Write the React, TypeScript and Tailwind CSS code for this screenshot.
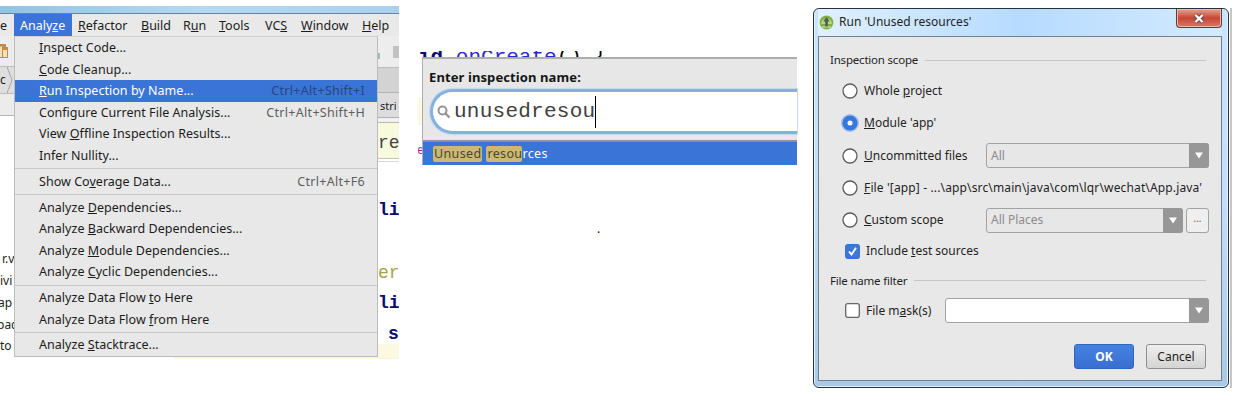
import React from "react";
import clsx from "clsx";

/** Renders a label, underlining the character that follows "&". */
function Label({ text }: { text: string }) {
  const i = text.indexOf("&");
  if (i < 0) return <>{text}</>;
  return (
    <>
      {text.slice(0, i)}
      <span className="underline decoration-1 underline-offset-1">{text[i + 1]}</span>
      {text.slice(i + 2)}
    </>
  );
}

type Item = { text: string; keys?: string; active?: boolean };

const groups: Item[][] = [
  [
    { text: "&Inspect Code..." },
    { text: "&Code Cleanup..." },
    { text: "&Run Inspection by Name...", keys: "Ctrl+Alt+Shift+I", active: true },
    { text: "Configure Current File Analysis...", keys: "Ctrl+Alt+Shift+H" },
    { text: "View &Offline Inspection Results..." },
    { text: "Infer Nullity..." },
  ],
  [{ text: "Show Co&verage Data...", keys: "Ctrl+Alt+F6" }],
  [
    { text: "Analyze &Dependencies..." },
    { text: "Analyze &Backward Dependencies..." },
    { text: "Analyze &Module Dependencies..." },
    { text: "Analyze &Cyclic Dependencies..." },
  ],
  [{ text: "Analyze Data Flow &to Here" }, { text: "Analyze Data Flow &from Here" }],
  [{ text: "Analyze &Stacktrace..." }],
];

const menus = [
  { text: "&Refactor", width: "w-[63px]" },
  { text: "&Build", width: "w-[42px]" },
  { text: "R&un", width: "w-[36px]" },
  { text: "&Tools", width: "w-[46px]" },
  { text: "VC&S", width: "w-[36px]" },
  { text: "&Window", width: "w-[61px]" },
  { text: "&Help", width: "w-[36px]" },
];

function LeftStrip() {
  return (
    <div className="flex w-[14px] shrink-0 flex-col overflow-hidden whitespace-nowrap text-[12px]">
      <div className="flex h-[30px] items-center bg-[#ececec]">
        <svg width="10" height="18" viewBox="0 0 10 18">
          <path d="M0 2h6v3h2v11H0z" fill="#c08c46" />
          <path d="M0 5l2-1v11H0zM3 8h4v7H3z" fill="#f4dfb8" />
        </svg>
      </div>
      <div className="flex h-[28px] items-center border-y border-[#bdbdbd] bg-[#dedede]">
        <span className="w-[7px] leading-[20px]">c</span>
        <svg width="7" height="26" viewBox="0 0 7 26">
          <path d="M0 0l5 13-5 13" fill="none" stroke="#a5a5a5" />
        </svg>
      </div>
      <div className="h-[22px] border-b border-[#b5b5b5] bg-[#ececec]" />
      <div className="h-[133px]" />
      <div className="h-[22px] pl-[2px] leading-[20px]">r.v</div>
      <div className="h-[21px] leading-[20px]">ivi</div>
      <div className="-ml-[2px] h-[22px] leading-[22px]">ap</div>
      <div className="-ml-[3px] h-[21px] leading-[22px]">pac</div>
      <div className="h-[21px] leading-[22px]">to</div>
    </div>
  );
}

function RightStrip() {
  return (
    <div className="flex w-[21px] shrink-0 flex-col overflow-hidden whitespace-nowrap font-['Liberation_Mono',monospace] text-[18px]">
      <div className="flex h-[32px] items-center border-b border-[#bcbcbc] bg-[#ededed] pt-[1px]">
        <div className="mt-[8px] h-[6px] w-[2px] bg-[#9dbfae]" />
        <div className="ml-[13px] h-[12px] w-[6px] bg-[#c2c2c2]" />
      </div>
      <div className="h-[25px] border-b border-[#b4b4b4] bg-[#d3d3d3]" />
      <div className="h-[25px] border-b border-[#b0b0b0] bg-[#dcdcdc] pl-[2px] font-['Noto_Sans',sans-serif] text-[11px] leading-[26px]">
        stri
      </div>
      <div className="h-[5px] border-b border-[#b8b8b8] bg-[#f0f0f0]" />
      <div className="h-[36px] border-b border-[#c3c3c3] bg-[#f8fade] leading-[41px] text-[#444]">re</div>
      <div className="h-[3px] border-b border-[#d9d9d9]" />
      <div className="h-[61px] pt-[34px] font-bold leading-[28px] text-[#0b0b70]">li</div>
      <div className="h-[63px] pt-[36px] leading-[28px] text-[#a3a34b]">er</div>
      <div className="h-[30px] font-bold leading-[34px] text-[#0b0b70]">li</div>
      <div className="h-[28px] pl-[10px] font-bold leading-[37px] text-[#0b0b70]">s</div>
      <div className="flex-1 bg-[#fdf8e2]" />
    </div>
  );
}

function MenuWindow() {
  return (
    <section className="mt-[6px] flex h-[353px] w-[399px] shrink-0 flex-col overflow-hidden text-[12.5px] text-[#1c1c1c]">
      <div className="h-[8px] shrink-0 border-b border-[#69839a] bg-linear-to-r from-[#8ec5e2] via-[#b3d9f2] to-[#a9d1ee]" />
      <div className="flex h-[22px] shrink-0 items-center bg-[#e9e9e9] leading-[23px] whitespace-nowrap">
        <span className="w-[14px]">e</span>
        <span className="h-full w-[58px] bg-[#3a74d6] pl-[6px] text-white">
          <Label text="Analy&ze" />
        </span>
        <span className="w-[6px]" />
        {menus.map((m) => (
          <span key={m.text} className={clsx("shrink-0", m.width)}>
            <Label text={m.text} />
          </span>
        ))}
      </div>
      <div className="flex min-h-0 flex-1">
        <LeftStrip />
        <div className="h-[321px] w-[364px] shrink-0 border border-t-[#cfcfcf] border-[#bcbcbc] bg-[#e8e8e8]">
          {groups.map((group, g) => (
            <React.Fragment key={g}>
              {g > 0 && (
                <div className="flex h-[4.2px] items-center">
                  <div className="h-px w-full bg-[#cacaca]" />
                </div>
              )}
              {group.map((item) => (
                <div
                  key={item.text}
                  className={clsx(
                    "flex h-[21.6px] items-center justify-between pr-[12px] pl-[24px] leading-[21.6px] whitespace-nowrap",
                    item.active && "bg-[#3a74d6] text-white",
                  )}
                >
                  <span className="tracking-[0.03px]">
                    <Label text={item.text} />
                  </span>
                  <span className={clsx("tracking-[0.3px]", item.active ? "text-[#27467f]" : "text-[#5e5e5e]")}>
                    {item.keys}
                  </span>
                </div>
              ))}
            </React.Fragment>
          ))}
        </div>
        <RightStrip />
      </div>
      <div className="flex h-[2px] shrink-0">
        <div className="w-[174px] bg-white" />
        <div className="flex-1 bg-[#fbf6dc]" />
      </div>
    </section>
  );
}

function SearchPopup() {
  return (
    <section className="mt-[51px] ml-[19px] flex w-[379px] shrink-0 flex-col">
      <div className="flex h-[6px] items-start overflow-hidden font-['Liberation_Mono',monospace] text-[21px] leading-[24px] whitespace-pre">
        <div className="-mt-[5px]">
          <span className="font-bold text-[#0b0b70]">id</span>
          <span className="text-[#2929c8]"> onCreate</span>
          <span>() {"{"}</span>
        </div>
      </div>
      <div className="flex">
        <div className="flex h-[108px] w-[4px] shrink-0 flex-col overflow-hidden text-[12px]">
          <div className="h-[40px]" />
          <div className="h-[28px] bg-[#fbf9e4]" />
          <div className="-ml-[1px] pt-[16px] text-[#95309a]">e</div>
        </div>
        <div className="flex h-[108px] flex-1 flex-col border-t-2 border-l border-[#adadad] bg-[#e7e7e7]">
          <div className="h-[30px] pt-[2px] pl-[6px] text-[13px] leading-[32px] font-bold tracking-[0.1px] whitespace-nowrap text-[#151515]">
            Enter inspection name:
          </div>
          <div className="ml-[7px] flex h-[45px] items-center rounded-l-[23px] border-[3px] border-r-0 border-[#82b1e2] bg-white pl-[4px] shadow-[0_0_1px_1px_#c3d9f0]">
            <svg width="14" height="16" viewBox="0 0 14 16" fill="none" stroke="#949494" strokeWidth="2">
              <circle cx="5.5" cy="6.5" r="4" />
              <path d="M8.5 9.5l4 4" strokeWidth="2.4" />
            </svg>
            <span className="ml-[3px] font-['Liberation_Mono',monospace] text-[21px] tracking-[0.25px] text-[#404040]">
              unusedresou
            </span>
            <div className="h-[32px] w-px bg-black" />
          </div>
          <div className="mt-[6px] flex h-[25px] items-center border-t-2 border-[#8e93a0] bg-[#3a74d6] pl-[10px] text-[12.5px] leading-[16px] tracking-[0.35px] text-white">
            <span className="mr-[4px] rounded-[2px] bg-[#c9b975] px-[1px] text-[#4c4828]">Unused</span>
            <span className="rounded-[2px] bg-[#c9b975] pl-[1px] text-[#4c4828]">resou</span>
            <span>rces</span>
          </div>
        </div>
      </div>
      <div className="mt-[54px] ml-[179px] text-[12px] leading-[20px]">.</div>
    </section>
  );
}

function Radio({ checked }: { checked?: boolean }) {
  return (
    <svg width="20" height="20" viewBox="0 0 20 20" className="shrink-0">
      {checked ? (
        <>
          <circle cx="10" cy="10" r="9" fill="#9fc0ec" />
          <circle cx="10" cy="10" r="7.6" fill="#3878d8" />
          <circle cx="10" cy="10" r="2.5" fill="#fff" />
        </>
      ) : (
        <circle cx="10" cy="10" r="7" fill="#fff" stroke="#5c5c5c" strokeWidth="1.3" />
      )}
    </svg>
  );
}

function Checkbox({ checked }: { checked?: boolean }) {
  return (
    <svg width="15" height="15" viewBox="0 0 15 15" className="shrink-0">
      <rect
        x="0.7"
        y="0.7"
        width="13.6"
        height="13.6"
        rx="2"
        fill={checked ? "#3c78d8" : "#fff"}
        stroke={checked ? "#3a70cc" : "#666"}
        strokeWidth="1.3"
      />
      {checked && <path d="M4 7.5l2.5 3L11 3.8" fill="none" stroke="#fff" strokeWidth="1.9" />}
    </svg>
  );
}

function Combo({ value, className, white }: { value?: string; className: string; white?: boolean }) {
  return (
    <div
      className={clsx(
        "flex h-[25px] items-center justify-between rounded-[3px] border border-[#a3a3a3] pl-[4px] text-[#8b8b8b]",
        white ? "bg-white" : "bg-[#e7e7e7]",
        className,
      )}
    >
      <span>{value}</span>
      <div className="-mr-px flex h-[25px] w-[20px] items-center justify-center rounded-r-[3px] bg-[#979797]">
        <svg width="8" height="7" viewBox="0 0 8 7">
          <path d="M0 .5h8L4 6.5z" fill="#fff" />
        </svg>
      </div>
    </div>
  );
}

function Section({ title }: { title: string }) {
  return (
    <div className="flex h-[20px] items-center pr-[15px] pl-[11px] text-[11.5px]">
      <span className="shrink-0 tracking-[-0.2px]">{title}</span>
      <div className="ml-[7px] h-px flex-1 bg-[#c6c6c6]" />
    </div>
  );
}

function RadioRow({
  text,
  checked,
  wide,
  children,
}: {
  text: string;
  checked?: boolean;
  wide?: boolean;
  children?: React.ReactNode;
}) {
  return (
    <div className="flex h-[32.3px] items-center pr-[12px] pl-[21px] whitespace-nowrap">
      <Radio checked={checked} />
      <span className={clsx("ml-[4px]", wide && "tracking-[0.14px]")}>
        <Label text={text} />
      </span>
      {children}
    </div>
  );
}

function Dialog() {
  return (
    <section className="mt-[8px] ml-[16px] flex shrink-0 text-[12px] text-[#1f1f1f]">
      <div className="flex h-[380px] w-[416px] flex-col rounded-[6px] border border-[#26323f] bg-linear-to-b from-[#c9e4fc] via-[#c3defa] to-[#a9c8e6] pr-[6px] pb-[6px] pl-[4px] shadow-[inset_0_0_0_1px_#e5f3ff]">
        <div className="flex h-[27px] shrink-0 items-start justify-between bg-linear-to-r from-[#e0f0fe] via-[#b6dbff] to-[#d4eafe] pl-[1px]">
          <div className="flex items-center pt-[1px]">
            <svg width="15" height="24" viewBox="0 0 15 24">
              <circle cx="7.5" cy="12.5" r="6.900" fill="#83b13f" />
              <path d="M2 14a5.500 5.500 0 0 1 11 0" fill="#b8d58b" />
              <path d="M7.500 7l3.200 4.500H8.800v6H6.200v-6H4.300z" fill="#4d5e50" />
              <path d="M3 17h9" stroke="#d9e6cb" />
            </svg>
            <span className="ml-[5px]">Run 'Unused resources'</span>
          </div>
          <div className="flex h-[19px] w-[46px] items-center justify-center rounded-b-[4px] border border-t-0 border-[#633a38] bg-linear-to-b from-[#e5a395] via-[#c64532] to-[#d97868] shadow-[inset_0_0_0_1px_#eab9ae]">
            <svg width="12" height="11" viewBox="0 0 12 11" fill="none">
              <path d="M2.500 2l7 7M9.500 2l-7 7" stroke="#5a4a4c" strokeWidth="4" />
              <path d="M2.500 2l7 7M9.500 2l-7 7" stroke="#fff" strokeWidth="2.300" />
            </svg>
          </div>
        </div>
        <div className="flex min-h-0 flex-1 flex-col border border-[#6f8191] bg-[#e8e8e8] pt-[13px]">
          <Section title="Inspection scope" />
          <div className="mt-[5px]">
            <RadioRow text="Whole &project" />
            <RadioRow text="&Module 'app'" checked />
            <RadioRow text="&Uncommitted files">
              <Combo value="All" className="ml-auto w-[223px]" />
            </RadioRow>
            <RadioRow text="&File '[app] - ...\app\src\main\java\com\lqr\wechat\App.java'" wide />
            <RadioRow text="&Custom scope">
              <Combo value="All Places" className="ml-auto w-[197px]" />
              <button className="ml-[3px] flex h-[25px] w-[23px] items-center justify-center rounded-[3px] border border-[#a3a3a3] bg-[#efefef] pb-[4px] text-[10px] text-[#666]">
                ...
              </button>
            </RadioRow>
          </div>
          <div className="flex h-[30px] items-center pl-[26px]">
            <Checkbox checked />
            <span className="ml-[6px]">
              <Label text="Include &test sources" />
            </span>
          </div>
          <div className="mt-[4px]">
            <Section title="File name filter" />
          </div>
          <div className="mt-[7px] flex h-[27px] items-center pr-[12px] pl-[26px]">
            <Checkbox />
            <span className="ml-[6px]">
              <Label text="File m&ask(s)" />
            </span>
            <Combo white className="ml-auto w-[264px]" />
          </div>
          <div className="mt-[20px] flex justify-end gap-[12px] pr-[15px]">
            <button className="h-[25px] w-[60px] rounded-[3px] border border-[#2f66bd] bg-linear-to-b from-[#4682e2] to-[#386fd0] font-bold text-white">
              OK
            </button>
            <button className="h-[25px] w-[60px] rounded-[3px] border border-[#8f8f8f] bg-linear-to-b from-[#efefef] to-[#d4d4d4]">
              Cancel
            </button>
          </div>
        </div>
      </div>
      <div className="ml-[1px] h-[380px] w-[2px] bg-[#c9c5c5]" />
    </section>
  );
}

export default function App() {
  return (
    <main className="flex h-[400px] w-[1238px] items-start overflow-hidden bg-white font-['Noto_Sans','Noto_Sans_CJK_SC',sans-serif]">
      <MenuWindow />
      <SearchPopup />
      <Dialog />
    </main>
  );
}
